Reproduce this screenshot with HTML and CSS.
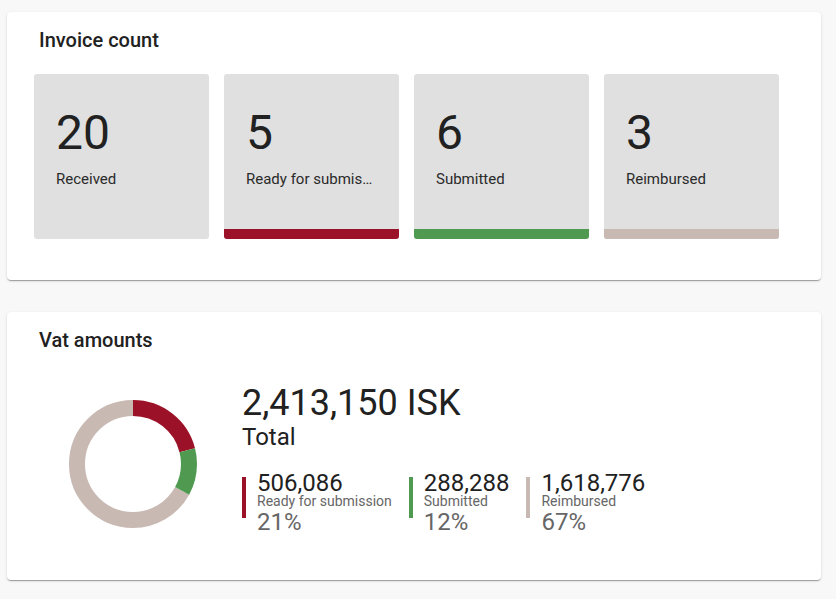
FILE: index.html
```html
<!DOCTYPE html>
<html lang="en">
<head>
<meta charset="utf-8">
<title>Dashboard</title>
<link rel="stylesheet" href="styles.css">
</head>
<body>
<main class="page">
  <section class="card card--count">
    <h2 class="card-title">Invoice count</h2>
    <div class="tiles">
      <div class="tile">
        <div class="tile-body">
          <div class="tile-value">20</div>
          <div class="tile-label">Received</div>
        </div>
      </div>
      <div class="tile">
        <div class="tile-body">
          <div class="tile-value">5</div>
          <div class="tile-label">Ready for submission</div>
        </div>
        <div class="tile-bar bar--red"></div>
      </div>
      <div class="tile">
        <div class="tile-body">
          <div class="tile-value">6</div>
          <div class="tile-label">Submitted</div>
        </div>
        <div class="tile-bar bar--green"></div>
      </div>
      <div class="tile">
        <div class="tile-body">
          <div class="tile-value">3</div>
          <div class="tile-label">Reimbursed</div>
        </div>
        <div class="tile-bar bar--beige"></div>
      </div>
    </div>
  </section>

  <section class="card card--vat">
    <h2 class="card-title">Vat amounts</h2>
    <div class="vat-body">
      <svg class="donut" width="128" height="128" viewBox="0 0 128 128">
        <g transform="rotate(-90 64 64)" fill="none" stroke-width="16">
          <circle cx="64" cy="64" r="56" stroke="#c8b9b3" stroke-dasharray="236.03 351.86" stroke-dashoffset="-115.83"></circle>
          <circle cx="64" cy="64" r="56" stroke="#9b1128" stroke-dasharray="73.80 351.86" stroke-dashoffset="0"></circle>
          <circle cx="64" cy="64" r="56" stroke="#4f9a50" stroke-dasharray="42.03 351.86" stroke-dashoffset="-73.80"></circle>
        </g>
      </svg>
      <div class="vat-summary">
        <div class="vat-total">2,413,150 ISK</div>
        <div class="vat-total-label">Total</div>
        <div class="vat-items">
          <div class="vat-item">
            <span class="vat-item-bar bar--red"></span>
            <div class="vat-item-text">
              <div class="vat-item-value">506,086</div>
              <div class="vat-item-label">Ready for submission</div>
              <div class="vat-item-pct">21%</div>
            </div>
          </div>
          <div class="vat-item">
            <span class="vat-item-bar bar--green"></span>
            <div class="vat-item-text">
              <div class="vat-item-value">288,288</div>
              <div class="vat-item-label">Submitted</div>
              <div class="vat-item-pct">12%</div>
            </div>
          </div>
          <div class="vat-item">
            <span class="vat-item-bar bar--beige"></span>
            <div class="vat-item-text">
              <div class="vat-item-value">1,618,776</div>
              <div class="vat-item-label">Reimbursed</div>
              <div class="vat-item-pct">67%</div>
            </div>
          </div>
        </div>
      </div>
    </div>
  </section>
</main>
</body>
</html>
```
FILE: styles.css
```css
* { box-sizing: border-box; }

html, body {
  margin: 0;
  padding: 0;
  background: #f8f8f8;
  font-family: Roboto, "Noto Sans", "Liberation Sans", sans-serif;
  color: #212121;
}

.page {
  display: flex;
  flex-direction: column;
  gap: 32px;
  padding: 12px 15px 12px 7px;
}

.card {
  background: #ffffff;
  border-radius: 4px;
  box-shadow: 0 2px 1px -1px rgba(0,0,0,0.2), 0 1px 1px 0 rgba(0,0,0,0.14), 0 1px 3px 0 rgba(0,0,0,0.12);
}

.card--count { padding: 16px 27px 41px; }
.card--vat { padding: 16px 27px 46px; }

.card-title {
  margin: 0 0 22px 5px;
  font-size: 20px;
  line-height: 24px;
  font-weight: 500;
  color: #212121;
}

.tiles {
  display: flex;
  gap: 15px;
}

.tile {
  width: 175px;
  height: 165px;
  background: #e0e0e0;
  border-radius: 3px;
  overflow: hidden;
  display: flex;
  flex-direction: column;
}

.tile-body {
  flex: 1;
  padding: 35px 24px 0 22px;
  min-width: 0;
}

.tile-value {
  font-size: 48px;
  line-height: 48px;
  font-weight: 400;
  color: #212121;
}

.tile-label {
  margin-top: 14px;
  font-size: 15px;
  line-height: 16px;
  color: #2a2a2a;
  white-space: nowrap;
  overflow: hidden;
  text-overflow: ellipsis;
}

.tile-bar { height: 10px; flex: none; }

.bar--red { background: #9b1128; }
.bar--green { background: #4f9a50; }
.bar--beige { background: #c8b9b3; }

.vat-body {
  display: flex;
  align-items: flex-start;
  margin-top: 33px;
}

.donut {
  flex: none;
  display: block;
  margin: 15px 45px 0 35px;
}

.vat-total {
  font-size: 36px;
  line-height: 36px;
  color: #212121;
}

.vat-total-label {
  margin-top: 4px;
  font-size: 24px;
  line-height: 24px;
  color: #212121;
}

.vat-items {
  display: flex;
  gap: 17px;
  margin-top: 23px;
}

.vat-item {
  display: flex;
  align-items: flex-start;
}

.vat-item-bar {
  display: block;
  width: 4px;
  height: 41px;
  margin-top: 5px;
  flex: none;
}

.vat-item-text { margin-left: 11px; }

.vat-item-value {
  font-size: 24px;
  line-height: 22px;
  color: #212121;
}

.vat-item-label {
  font-size: 14px;
  line-height: 14px;
  color: #666666;
}

.vat-item-pct {
  margin-top: 2px;
  font-size: 24px;
  line-height: 24px;
  color: #666666;
}
```
